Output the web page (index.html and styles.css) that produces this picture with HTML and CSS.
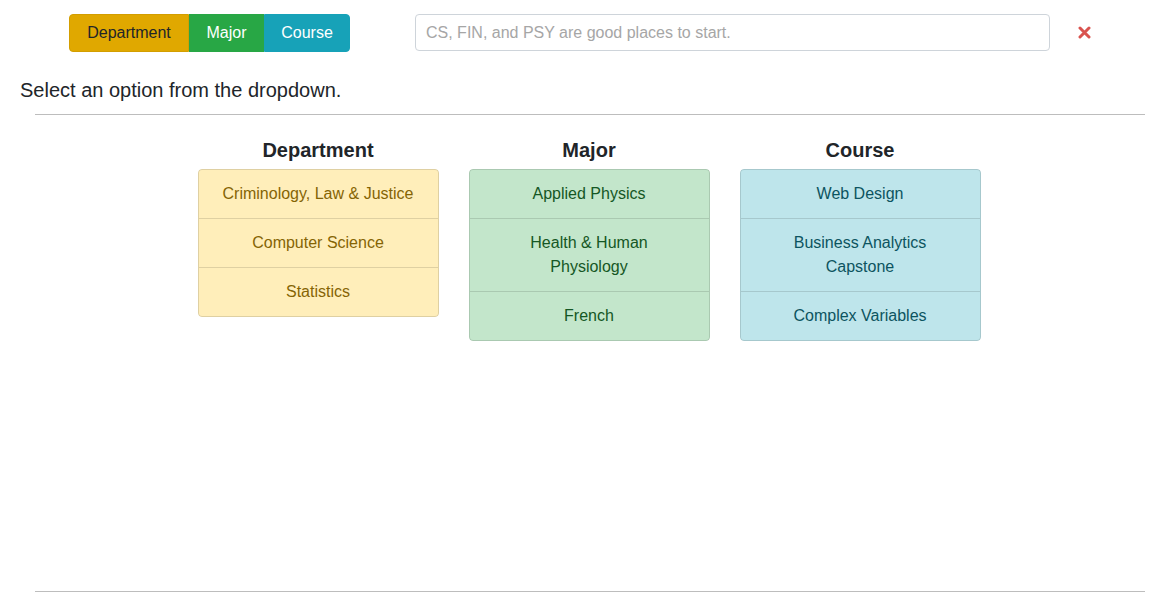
FILE: index.html
```html
<!DOCTYPE html>
<html>
<head>
<meta charset="utf-8">
<link rel="stylesheet" href="styles.css">
</head>
<body>
<div class="top-row">
  <div class="btn-group">
    <button class="btn btn-dept">Department</button>
    <button class="btn btn-major">Major</button>
    <button class="btn btn-course">Course</button>
  </div>
  <input class="search" type="text" placeholder="CS, FIN, and PSY are good places to start.">
  <span class="clear" aria-label="clear">
    <svg width="13" height="13" viewBox="0 0 13 13"><path d="M2 2 L11 11 M11 2 L2 11" stroke="#d9534f" stroke-width="3" stroke-linecap="round"/></svg>
  </span>
</div>
<p class="hint">Select an option from the dropdown.</p>
<hr class="rule">
<section class="results">
  <div class="column">
    <h3 class="col-title">Department</h3>
    <ul class="list list-warning">
      <li>Criminology, Law &amp; Justice</li>
      <li>Computer Science</li>
      <li>Statistics</li>
    </ul>
  </div>
  <div class="column">
    <h3 class="col-title">Major</h3>
    <ul class="list list-success">
      <li>Applied Physics</li>
      <li>Health &amp; Human Physiology</li>
      <li>French</li>
    </ul>
  </div>
  <div class="column">
    <h3 class="col-title">Course</h3>
    <ul class="list list-info">
      <li>Web Design</li>
      <li>Business Analytics Capstone</li>
      <li>Complex Variables</li>
    </ul>
  </div>
</section>
<hr class="rule">
</body>
</html>
```
FILE: styles.css
```css
* { box-sizing: border-box; }
html, body { margin: 0; padding: 0; background: #fff; }
body {
  font-family: "Liberation Sans", Arial, sans-serif;
  font-size: 16px;
  line-height: 24px;
  color: #212529;
}
.top-row {
  display: flex;
  align-items: flex-start;
  padding-top: 14px;
  height: 52px;
}
.btn-group {
  display: flex;
  margin-left: 69px;
}
.btn {
  font-family: inherit;
  font-size: 16px;
  line-height: 24px;
  padding: 6px 0;
  text-align: center;
  border: 1px solid transparent;
  margin: 0;
  height: 38px;
  cursor: pointer;
}
.btn-dept { width: 120px; background: #e0a800; border-color: #d39e00; color: #212529; border-radius: 4px 0 0 4px; }
.btn-major { width: 75px; background: #28a745; border-color: #28a745; color: #fff; }
.btn-course { width: 86px; background: #17a2b8; border-color: #17a2b8; color: #fff; border-radius: 0 4px 4px 0; }
.search {
  margin-left: 65px;
  width: 635px;
  height: 37px;
  padding: 6px 10px;
  font-family: inherit;
  font-size: 16px;
  border: 1px solid #ced4da;
  border-radius: 4px;
  color: #495057;
  outline: none;
}
.search::placeholder { color: #a6a6a6; }
.clear {
  margin-left: 28px;
  display: flex;
  align-items: center;
  margin-top: 12px;
}
.hint {
  margin: 23px 0 0 20px;
  font-size: 20px;
  line-height: 30px;
}
.rule {
  margin: 9px 24px 0 35px;
  border: 0;
  border-top: 1px solid #bdbdbd;
  height: 0;
}
.results {
  display: flex;
  justify-content: center;
  gap: 30px;
  margin: 0 25px 0 34px;
  padding-top: 23px;
  min-height: 476px;
  align-items: flex-start;
}
.results + .rule { margin-top: 0; }
.column { width: 241px; }
.col-title {
  margin: 0 0 7px;
  text-align: center;
  font-size: 20px;
  line-height: 24px;
  font-weight: bold;
}
.list {
  list-style: none;
  margin: 0;
  padding: 0;
  border-radius: 4px;
  overflow: hidden;
}
.list li {
  padding: 12px 20px;
  text-align: center;
  border: 1px solid rgba(0,0,0,0.125);
  border-top-width: 0;
}
.list li:first-child { border-top-width: 1px; border-radius: 4px 4px 0 0; }
.list li:last-child { border-radius: 0 0 4px 4px; }
.list-warning li { background: #ffeeba; color: #856404; }
.list-success li { background: #c3e6cb; color: #155724; }
.list-info li { background: #bee5eb; color: #0c5460; }
```
